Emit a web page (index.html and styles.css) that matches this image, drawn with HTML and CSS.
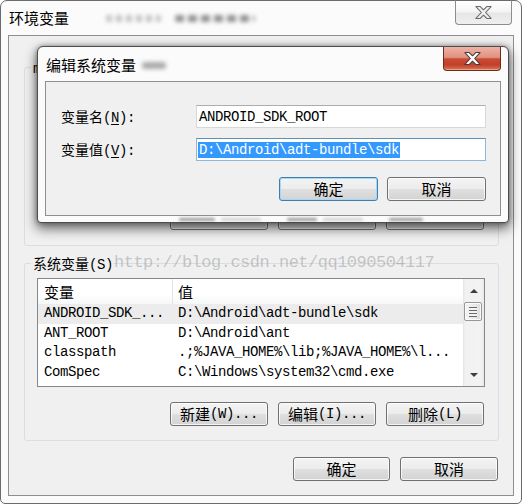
FILE: index.html
```html
<!DOCTYPE html>
<html lang="zh-CN">
<head>
<meta charset="utf-8">
<title>环境变量</title>
<link rel="stylesheet" href="styles.css">
</head>
<body>
<div class="window">
  <div class="titlebar">
    <div class="title">环境变量<span class="smudge smudge-a"></span><span class="smudge smudge-b"></span></div>
    <div class="close close-light">
      <svg width="17" height="13" viewBox="-0.5 -0.5 15 12"><polygon points="0,0 4,0 7,3 10,0 14,0 9,5.5 14,11 10,11 7,8 4,11 0,11 5,5.5" fill="#eeeeee" stroke="#6a6a6a" stroke-width="1" stroke-linejoin="round"/></svg>
    </div>
  </div>
  <div class="client">
    <div class="group group-user">
      <div class="group-title"><span class="m">m</span></div>
      <div class="listview"></div>
      <div class="btn-row">
        <button class="btn" aria-label="新建"></button>
        <button class="btn" aria-label="编辑"></button>
        <button class="btn" aria-label="删除"></button>
      </div>
    </div>
    <div class="group group-sys">
      <div class="group-title">系统变量<span class="m">(S)</span></div>
      <div class="listview">
        <div class="lv-body">
          <div class="lv-head">
            <div class="lv-c1">变量</div>
            <div class="lv-c2">值</div>
          </div>
          <div class="lv-row lv-selected"><div class="lv-c1">ANDROID_SDK_...</div><div class="lv-c2">D:\Android\adt-bundle\sdk</div></div>
          <div class="lv-row"><div class="lv-c1">ANT_ROOT</div><div class="lv-c2">D:\Android\ant</div></div>
          <div class="lv-row"><div class="lv-c1">classpath</div><div class="lv-c2">.;%JAVA_HOME%\lib;%JAVA_HOME%\l...</div></div>
          <div class="lv-row"><div class="lv-c1">ComSpec</div><div class="lv-c2">C:\Windows\system32\cmd.exe</div></div>
        </div>
        <div class="sb">
          <div class="sb-btn"><span class="arrow-up"></span></div>
          <div class="sb-thumb"><span class="grip"></span></div>
          <div class="sb-track"></div>
          <div class="sb-btn sb-btn-down"><span class="arrow-down"></span></div>
        </div>
      </div>
      <div class="btn-row">
        <button class="btn">新建<span class="m">(W)...</span></button>
        <button class="btn">编辑<span class="m">(I)...</span></button>
        <button class="btn">删除<span class="m">(L)</span></button>
      </div>
    </div>
    <div class="btn-row actions">
      <button class="btn btn-ok">确定</button>
      <button class="btn btn-cancel">取消</button>
    </div>
  </div>

  <div class="watermark">http://blog.csdn.net/qq1090504117</div>

  <div class="dialog">
    <div class="dlg-titlebar">
      <div class="dlg-title">编辑系统变量<span class="smudge smudge-c"></span></div>
      <div class="close close-red">
        <svg width="17" height="13" viewBox="-0.5 -0.5 15 12"><polygon points="0,0 4,0 7,3 10,0 14,0 9,5.5 14,11 10,11 7,8 4,11 0,11 5,5.5" fill="#ffffff" stroke="#4a3b3b" stroke-width="1" stroke-linejoin="round"/></svg>
      </div>
    </div>
    <div class="dlg-client">
      <div class="form">
        <div class="label">变量名<span class="m">(<u>N</u>):</span></div>
        <div class="field"><span class="m">ANDROID_SDK_ROOT</span></div>
        <div class="label">变量值<span class="m">(<u>V</u>):</span></div>
        <div class="field field-focus"><span class="m sel">D:\Android\adt-bundle\sdk</span></div>
      </div>
      <div class="btn-row dlg-actions">
        <button class="btn btn-default">确定</button>
        <button class="btn">取消</button>
      </div>
    </div>
    <div class="dlg-ghost">
      <span class="blob blob-dark"></span><span class="blob blob-light"></span>
      <span class="blob blob-dark b2"></span><span class="blob blob-light"></span>
      <span class="blob blob-dark b3"></span>
    </div>
  </div>
</div>
</body>
</html>
```
FILE: styles.css
```css
* { box-sizing: border-box; }
html, body { margin: 0; padding: 0; }
body {
  width: 522px;
  height: 504px;
  overflow: hidden;
  background: #ffffff;
  font-family: "Noto Sans CJK SC", sans-serif;
  font-size: 14px;
  color: #000;
}
.m {
  font-family: "Liberation Mono", "Noto Sans CJK SC", monospace;
  font-size: 14px;
  letter-spacing: -0.4px;
}
u { text-decoration: underline; text-underline-offset: 2px; }

/* outer window */
.window {
  position: relative;
  width: 522px;
  height: 504px;
  border: 1px solid #6b6b6b;
  border-radius: 7px 7px 5px 5px;
  background: #fbfbfb;
  padding: 0 7px 7px 7px;
  display: flex;
  flex-direction: column;
}
.titlebar {
  height: 34px;
  display: flex;
  justify-content: space-between;
  align-items: flex-start;
}
.title {
  margin: 7px 0 0 1px;
  font-size: 15px;
  line-height: 20px;
  white-space: nowrap;
  display: flex;
  align-items: center;
}
.smudge {
  display: inline-block;
  height: 7px;
  filter: blur(2px);
  border-radius: 3px;
}
.smudge-a {
  width: 55px;
  margin-left: 37px;
  background: repeating-linear-gradient(90deg, rgba(90,90,90,0.35) 0 6px, transparent 6px 10px);
}
.smudge-b {
  width: 80px;
  margin-left: 14px;
  background: repeating-linear-gradient(90deg, rgba(60,60,60,0.55) 0 9px, transparent 9px 13px);
}
.smudge-c {
  width: 24px;
  margin-left: 6px;
  background: rgba(70,70,70,0.45);
}

.close {
  display: flex;
  align-items: center;
  justify-content: center;
  border-radius: 0 0 4px 4px;
}
.close-light {
  width: 57px;
  height: 25px;
  margin: -1px 2px 0 0;
  border: 1px solid #8d8d8d;
  border-top-color: #6b6b6b;
  background: linear-gradient(#ffffff 0%, #f4f4f4 48%, #e6e6e6 52%, #efefef 100%);
}
.close-red {
  width: 58px;
  height: 24px;
  border: 1px solid #6d2a1f;
  border-top: none;
  background: linear-gradient(#eeb2a5 0%, #e09282 45%, #c94a33 52%, #c3402a 78%, #d8785c 100%);
  box-shadow: inset 0 -1px 0 rgba(255,190,160,0.6);
}

.client {
  flex: 1;
  border: 1px solid #8e8f8f;
  background: #f0f0f0;
  padding: 31px 14px 0 15px;
}

/* group boxes */
.group {
  border: 1px solid #d5dfe5;
  border-radius: 3px;
  padding: 0 13px 14px 12px;
}
.group-user { padding-bottom: 15px; }
.group-sys { margin-top: 17px; }
.group-title {
  width: fit-content;
  height: 20px;
  line-height: 20px;
  margin: -11px 0 0 -6px;
  padding: 0 0 0 2px;
  background: #f0f0f0;
  white-space: nowrap;
}

/* list view */
.listview {
  margin-top: 5px;
  height: 109px;
  border: 1px solid #828790;
  background: #ffffff;
  display: flex;
}
.lv-body { flex: 1; }
.lv-head {
  display: flex;
  height: 25px;
  line-height: 25px;
  font-size: 15px;
  background: linear-gradient(#ffffff 0%, #ffffff 60%, #f6f7f8 100%);
}
.lv-head .lv-c1 { border-right: 1px solid #e3e5e8; }
.lv-c1 { width: 135px; padding-left: 6px; white-space: nowrap; overflow: hidden; }
.lv-c2 { flex: 1; padding-left: 5px; white-space: nowrap; overflow: hidden; }
.lv-row {
  display: flex;
  height: 19.5px;
  line-height: 19.5px;
  font-family: "Liberation Mono", monospace;
  font-size: 14px;
  letter-spacing: -0.4px;
}
.lv-selected { background: #ececec; }

/* scrollbar */
.sb {
  width: 21px;
  display: flex;
  flex-direction: column;
  background: linear-gradient(90deg, #e4e4e4 0, #f1f1f1 2px, #f3f3f3 18px, #e8e8e8 21px);
}
.sb-btn {
  height: 23px;
  display: flex;
  align-items: center;
  justify-content: center;
}
.sb-btn-down { height: 22px; }
.arrow-up, .arrow-down {
  width: 0;
  height: 0;
  border-left: 4px solid transparent;
  border-right: 4px solid transparent;
}
.arrow-up { border-bottom: 4px solid #3f3f3f; }
.arrow-down { border-top: 4px solid #3f3f3f; }
.sb-thumb {
  height: 19px;
  margin: 0 2px 0 1px;
  border: 1px solid #979797;
  border-radius: 2px;
  background: linear-gradient(90deg, #f5f5f5 0%, #ebebeb 50%, #dedede 100%);
  box-shadow: inset 0 0 0 1px rgba(255,255,255,0.8);
  display: flex;
  align-items: center;
  justify-content: center;
}
.grip {
  width: 8px;
  height: 10px;
  background: repeating-linear-gradient(#6a6a6a 0 1px, #f4f4f4 1px 3px);
}
.sb-track { flex: 1; }

/* buttons */
.btn-row {
  display: flex;
  justify-content: flex-end;
  gap: 10px;
  margin-top: 15px;
  margin-right: 1px;
}
.btn {
  width: 98px;
  height: 24px;
  padding: 0;
  margin: 0;
  border: 1px solid #707070;
  border-radius: 3px;
  background: linear-gradient(#f4f4f4 0%, #ececec 48%, #dfdfdf 52%, #d3d3d3 100%);
  box-shadow: inset 0 0 0 1px rgba(255,255,255,0.75);
  font-family: "Noto Sans CJK SC", sans-serif;
  font-size: 15px;
  line-height: 22px;
  color: #000;
  white-space: nowrap;
  display: flex;
  align-items: center;
  justify-content: center;
}
.actions {
  margin-top: 16px;
  margin-right: 0;
  padding-right: 1px;
}
.btn-ok { width: 97px; }

/* watermark */
.watermark {
  position: absolute;
  left: 113px;
  top: 251px;
  line-height: 22px;
  font-family: "Liberation Mono", monospace;
  font-size: 17px;
  letter-spacing: -0.5px;
  color: rgba(120,120,120,0.38);
  white-space: nowrap;
}

/* edit dialog */
.dialog {
  position: absolute;
  left: 36px;
  top: 45px;
  width: 472px;
  height: 177px;
  border: 1px solid #4d4d4d;
  border-radius: 6px 6px 4px 4px;
  background: #fbfbfb;
  padding: 0 7px;
  display: flex;
  flex-direction: column;
  box-shadow: 0 5px 12px 1px rgba(0,0,0,0.55), 0 0 5px rgba(0,0,0,0.35);
}
.dlg-titlebar {
  height: 34px;
  display: flex;
  justify-content: space-between;
  align-items: flex-start;
}
.dlg-title {
  margin: 8px 0 0 1px;
  font-size: 15px;
  line-height: 20px;
  white-space: nowrap;
  display: flex;
  align-items: center;
}
.dlg-client {
  flex: 1;
  border: 1px solid #8e8f8f;
  background: #f0f0f0;
  padding: 23px 14px 0 15px;
}
.dlg-ghost {
  height: 6px;
  display: flex;
  align-items: center;
  padding-left: 134px;
  gap: 6px;
}
.blob {
  height: 3px;
  border-radius: 2px;
  filter: blur(1.5px);
}
.blob-dark { width: 36px; background: rgba(60,60,60,0.5); }
.blob-light { width: 40px; background: rgba(90,90,90,0.25); }
.b2 { margin-left: 20px; width: 30px; }
.b3 { margin-left: 20px; width: 34px; }
.form {
  display: grid;
  grid-template-columns: 135px 290px;
  grid-auto-rows: 23px;
  row-gap: 10px;
  align-items: center;
}
.label { white-space: nowrap; line-height: 20px; }
.field {
  height: 23px;
  border: 1px solid #d6d8dc;
  border-top-color: #abadb3;
  background: #ffffff;
  padding-left: 2px;
  display: flex;
  align-items: center;
  white-space: nowrap;
}
.field-focus {
  border-color: #8eb8db;
  border-top-color: #5b91c0;
  padding-left: 1px;
}
.sel {
  background: #3399ff;
  color: #ffffff;
  line-height: 16px;
  padding: 0 1px;
}
.dlg-actions {
  margin-top: 16px;
  margin-right: 0;
  gap: 9px;
}
.dlg-actions .btn { width: 99px; }
.btn-default {
  border-color: #3c7fb1;
  box-shadow: inset 0 0 0 1px #a8d7f2;
}
```
